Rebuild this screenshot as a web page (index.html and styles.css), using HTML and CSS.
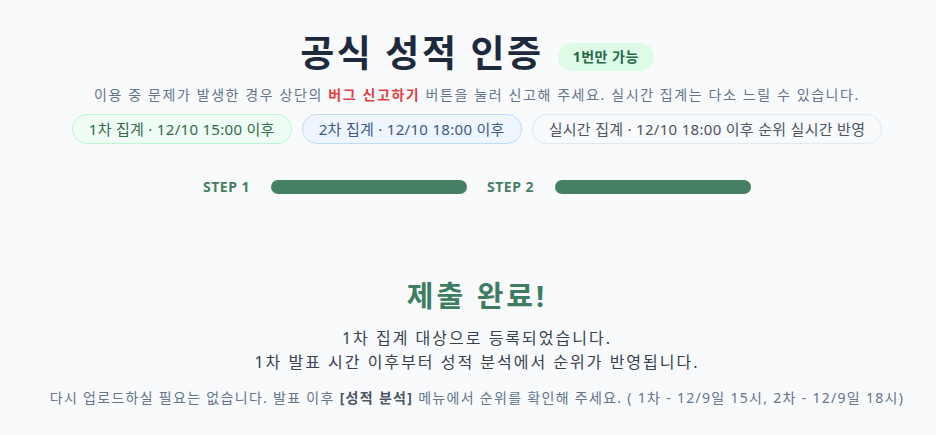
FILE: index.html
```html
<!DOCTYPE html>
<html lang="ko">

<head>
    <meta charset="UTF-8">
    <meta name="viewport" content="width=device-width, initial-scale=1.0">
    <title>공식 성적 인증</title>
    <link rel="stylesheet" href="styles.css">
</head>

<body>
    <div class="page">
        <header class="head">
            <div class="title-row">
                <h1>공식 성적 인증</h1>
                <span class="once-badge">1번만 가능</span>
            </div>
            <p class="notice">이용 중 문제가 발생한 경우 상단의 <b class="bug">버그 신고하기</b> 버튼을 눌러 신고해 주세요. 실시간 집계는 다소 느릴 수 있습니다.</p>
            <div class="pills">
                <span class="pill pill-green">1차 집계 · 12/10 15:00 이후</span>
                <span class="pill pill-blue">2차 집계 · 12/10 18:00 이후</span>
                <span class="pill pill-gray">실시간 집계 · 12/10 18:00 이후 순위 실시간 반영</span>
            </div>
        </header>

        <div class="steps">
            <div class="step">
                <span class="step-label">STEP 1</span>
                <span class="step-bar"></span>
            </div>
            <div class="step">
                <span class="step-label">STEP 2</span>
                <span class="step-bar"></span>
            </div>
        </div>

        <section class="done">
            <h2>제출 완료!</h2>
            <p class="done-msg">1차 집계 대상으로 등록되었습니다.<br>1차 발표 시간 이후부터 성적 분석에서 순위가 반영됩니다.</p>
            <p class="done-note">다시 업로드하실 필요는 없습니다. 발표 이후 <b>[성적 분석]</b> 메뉴에서 순위를 확인해 주세요. ( 1차 - 12/9일 15시, 2차 - 12/9일 18시)</p>
        </section>
    </div>
</body>

</html>
```

FILE: styles.css
```css
body {
    margin: 0;
    background: #f8fafc;
    font-family: "Noto Sans", "Noto Sans CJK KR", sans-serif;
    color: #374151;
}

.page {
    display: flex;
    flex-direction: column;
    align-items: center;
    padding: 29px 0 0 18px;
}

.head {
    display: flex;
    flex-direction: column;
    align-items: center;
}

.title-row {
    display: flex;
    align-items: center;
    gap: 14px;
}

h1 {
    margin: 0;
    font-size: 37px;
    line-height: 48px;
    font-weight: 700;
    letter-spacing: 2.5px;
    color: #1e293b;
}

.once-badge {
    background: #dcfce7;
    color: #276749;
    font-size: 14px;
    font-weight: 700;
    letter-spacing: 0.5px;
    padding: 0 15px;
    height: 28px;
    line-height: 28px;
    border-radius: 14px;
    margin-top: 8px;
}

.notice {
    margin: 7px 0 0;
    font-size: 14px;
    line-height: 22px;
    letter-spacing: 1.6px;
    color: #64748b;
}

.bug {
    color: #e53e3e;
}

.pills {
    display: flex;
    gap: 10px;
    margin-top: 8px;
}

.pill {
    font-size: 15px;
    letter-spacing: 0.3px;
    height: 30px;
    line-height: 28px;
    box-sizing: border-box;
    padding: 0 16px;
    border-radius: 15px;
    border: 1px solid;
}

.pill-green {
    background: #f0fdf4;
    border-color: #bbf7d0;
    color: #2f6b4a;
}

.pill-blue {
    background: #eff6ff;
    border-color: #bfdbfe;
    color: #3b5a8a;
}

.pill-gray {
    background: #f8fafc;
    border-color: #e2e8f0;
    color: #4b5563;
}

.steps {
    display: flex;
    gap: 20px;
    margin-top: 33px;
}

.step {
    display: flex;
    align-items: center;
    gap: 21px;
}

.step-label {
    font-size: 14px;
    font-weight: 700;
    letter-spacing: 0.5px;
    color: #467e64;
}

.step-bar {
    width: 196px;
    height: 14px;
    border-radius: 7px;
    background: #458063;
}

.done {
    display: flex;
    flex-direction: column;
    align-items: center;
    margin-top: 80px;
}

h2 {
    margin: 0;
    font-size: 29px;
    line-height: 40px;
    font-weight: 700;
    letter-spacing: 3px;
    color: #3f7d62;
}

.done-msg {
    margin: 10px 0 0;
    font-size: 16px;
    line-height: 24px;
    letter-spacing: 2px;
    color: #374151;
    text-align: center;
}

.done-note {
    margin: 13px 0 0;
    font-size: 14px;
    line-height: 22px;
    letter-spacing: 1.3px;
    color: #64748b;
    text-align: center;
}

.done-note b {
    color: #4b5563;
}
```
